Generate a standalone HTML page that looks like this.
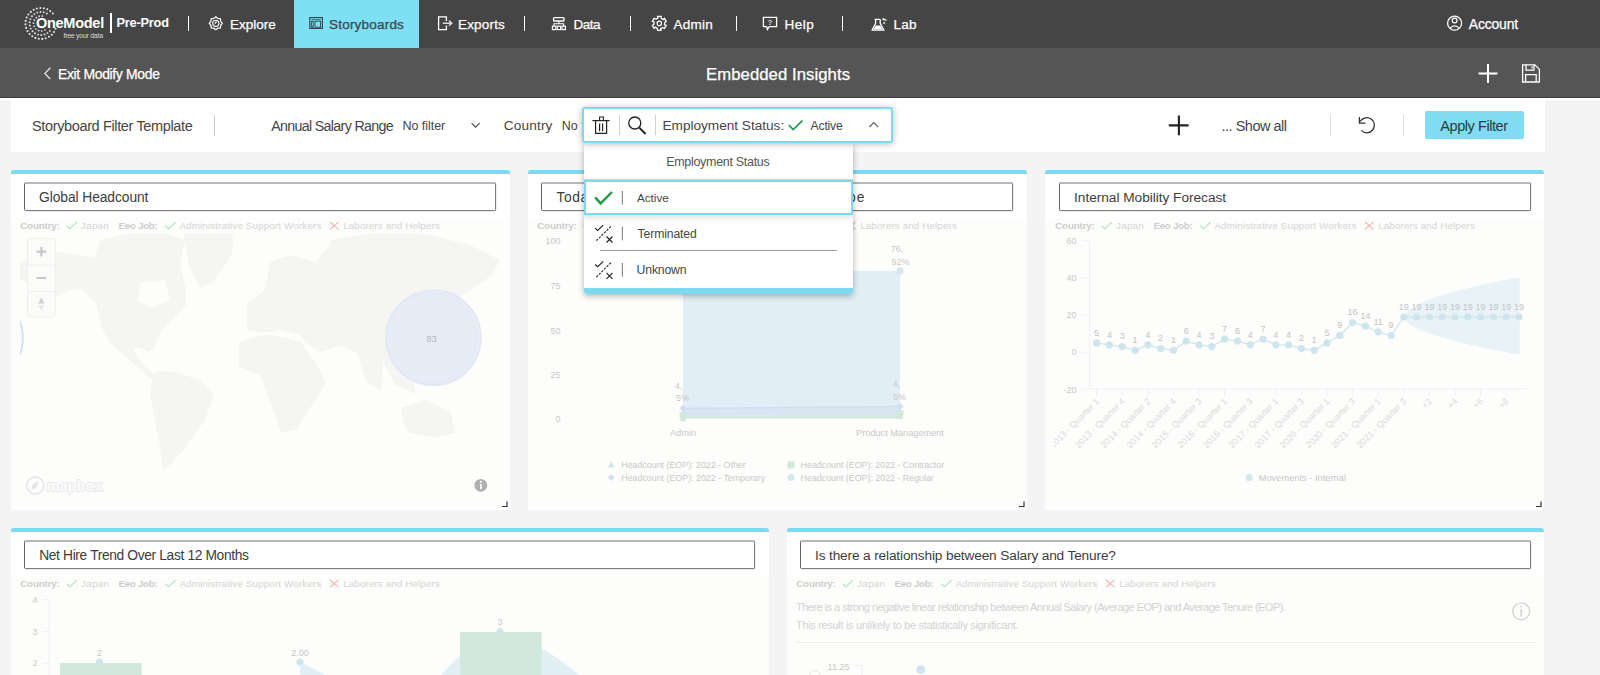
<!DOCTYPE html>
<html><head><meta charset="utf-8"><style>*{box-sizing:border-box;margin:0;padding:0}
html,body{width:1600px;height:675px;overflow:hidden;background:#f4f4f5;font-family:"Liberation Sans",sans-serif;position:relative}
.a{position:absolute;white-space:nowrap}
.card{background:#fdfdfb;border-top:4px solid #7dd9f0;border-radius:3px 3px 0 0}
.ttl{border-top:2px solid #b8b8b8;border-left:1px solid #666;border-right:1px solid #7c7c7c;border-bottom:1px solid #7c7c7c;border-radius:2px;background:#fff;height:29px;box-shadow:0.5px 0.5px 0.5px rgba(0,0,0,0.15)}
</style></head><body>
<div class="a" style="left:0;top:0;width:1600px;height:48px;background:#454545"></div>
<div class="a" style="left:0;top:48px;width:1600px;height:49px;background:#555555"></div>
<div class="a" style="left:0;top:97px;width:1600px;height:1px;background:#3e3e3e"></div>
<div class="a" style="left:0;top:98px;width:1600px;height:2px;background:#fff"></div>
<div class="a" style="left:294px;top:0;width:125px;height:48px;background:#7fdff5"></div>
<div class="a" style="left:188px;top:16px;width:1px;height:15px;background:#fff"></div>
<div class="a" style="left:524px;top:16px;width:1px;height:15px;background:#fff"></div>
<div class="a" style="left:630px;top:16px;width:1px;height:15px;background:#fff"></div>
<div class="a" style="left:736px;top:16px;width:1px;height:15px;background:#fff"></div>
<div class="a" style="left:842px;top:16px;width:1px;height:15px;background:#fff"></div>
<div class="a" style="left:110px;top:13px;width:1.5px;height:20px;background:#fff"></div>
<div class="a" style="left:11px;top:100px;width:1534px;height:52px;background:#fff"></div>
<div class="a" style="left:214px;top:115px;width:1px;height:21px;background:#ccc"></div>
<div class="a" style="left:1330px;top:115px;width:1px;height:21px;background:#ddd"></div>
<div class="a" style="left:1403px;top:115px;width:1px;height:21px;background:#ddd"></div>
<div class="a" style="left:1425px;top:111px;width:99px;height:28px;background:#7fdcf3;border-radius:2px"></div>
<svg class="a" style="left:0;top:100px;z-index:1" width="1600" height="52" viewBox="0 100 1600 52"><g fill="none" stroke="#444" stroke-width="1.1"><path d="M471.6 123.2 L475.6 127.2 L479.6 123.2"/></g><g stroke="#222" stroke-width="2.1" fill="none"><path d="M1178.9 115.6 V135.2 M1168.8 125.4 H1188.6"/></g><g stroke="#333" stroke-width="1.25" fill="none"><path d="M1361.2 130.4 A7.6 7.6 0 1 0 1360.2 121.4"/><path d="M1359.4 117 V123 H1365.4"/></g></svg>
<div class="a card" style="left:11px;top:170px;width:499px;height:340px"><div class="a" style="left:0;top:0;width:499px;height:44px;background:#fff"></div></div>
<div class="a card" style="left:528px;top:170px;width:499px;height:340px"><div class="a" style="left:0;top:0;width:499px;height:44px;background:#fff"></div></div>
<div class="a card" style="left:1045px;top:170px;width:499px;height:340px"><div class="a" style="left:0;top:0;width:499px;height:44px;background:#fff"></div></div>
<div class="a card" style="left:11px;top:528px;width:758px;height:160px"><div class="a" style="left:0;top:0;width:758px;height:44px;background:#fff"></div></div>
<div class="a card" style="left:787px;top:528px;width:757px;height:160px"><div class="a" style="left:0;top:0;width:757px;height:44px;background:#fff"></div></div>
<div class="a ttl" style="left:24px;top:182px;width:472px"></div>
<div class="a ttl" style="left:541px;top:182px;width:472px"></div>
<div class="a ttl" style="left:1059px;top:182px;width:472px"></div>
<div class="a ttl" style="left:24px;top:540px;width:731px"></div>
<div class="a ttl" style="left:800px;top:540px;width:731px"></div>
<svg class="a" style="left:0;top:0" width="1600" height="100" viewBox="0 0 1600 100">
<g fill="#e6e6e6"><circle cx="55.6" cy="28.8" r="1.05"/><circle cx="54.0" cy="32.0" r="1.05"/><circle cx="51.8" cy="34.7" r="1.05"/><circle cx="49.0" cy="36.8" r="1.05"/><circle cx="45.7" cy="38.3" r="1.05"/><circle cx="42.3" cy="38.9" r="1.05"/><circle cx="38.8" cy="38.8" r="1.05"/><circle cx="35.4" cy="37.9" r="1.05"/><circle cx="32.3" cy="36.3" r="1.05"/><circle cx="29.6" cy="34.0" r="1.05"/><circle cx="27.5" cy="31.1" r="1.05"/><circle cx="26.1" cy="27.9" r="1.05"/><circle cx="25.5" cy="24.4" r="1.05"/><circle cx="25.7" cy="20.9" r="1.05"/><circle cx="26.7" cy="17.5" r="1.05"/><circle cx="28.4" cy="14.5" r="1.05"/><circle cx="30.8" cy="11.9" r="1.05"/><circle cx="33.7" cy="9.8" r="1.05"/><circle cx="36.9" cy="8.5" r="1.05"/><circle cx="40.4" cy="8.0" r="1.05"/><circle cx="43.9" cy="8.3" r="1.05"/><circle cx="47.3" cy="9.3" r="1.05"/><circle cx="50.3" cy="11.1" r="1.05"/><circle cx="52.9" cy="13.5" r="1.05"/><circle cx="49.8" cy="30.9" r="0.95"/><circle cx="47.4" cy="33.1" r="0.95"/><circle cx="44.5" cy="34.5" r="0.95"/><circle cx="41.3" cy="35.0" r="0.95"/><circle cx="38.0" cy="34.6" r="0.95"/><circle cx="35.0" cy="33.3" r="0.95"/><circle cx="32.5" cy="31.3" r="0.95"/><circle cx="30.7" cy="28.6" r="0.95"/><circle cx="29.7" cy="25.5" r="0.95"/><circle cx="29.6" cy="22.2" r="0.95"/><circle cx="30.4" cy="19.1" r="0.95"/><circle cx="32.0" cy="16.3" r="0.95"/><circle cx="34.4" cy="14.1" r="0.95"/><circle cx="37.3" cy="12.6" r="0.95"/><circle cx="40.5" cy="12.0" r="0.95"/><circle cx="43.7" cy="12.3" r="0.95"/><circle cx="46.8" cy="13.5" r="0.95"/><circle cx="44.8" cy="30.0" r="0.85"/><circle cx="41.7" cy="31.0" r="0.85"/><circle cx="38.6" cy="30.6" r="0.85"/><circle cx="35.9" cy="29.0" r="0.85"/><circle cx="34.1" cy="26.3" r="0.85"/><circle cx="33.5" cy="23.2" r="0.85"/><circle cx="34.3" cy="20.1" r="0.85"/><circle cx="36.3" cy="17.7" r="0.85"/><circle cx="39.1" cy="16.2" r="0.85"/><circle cx="42.3" cy="16.1" r="0.85"/></g>
<g fill="none" stroke="#fff" stroke-width="1.3">
<polygon points="215.80,16.80 217.83,18.40 220.40,18.70 220.70,21.27 222.30,23.30 220.70,25.33 220.40,27.90 217.83,28.20 215.80,29.80 213.77,28.20 211.20,27.90 210.90,25.33 209.30,23.30 210.90,21.27 211.20,18.70 213.77,18.40" stroke-width="1.25"/>
<circle cx="215.8" cy="23.3" r="3.1" stroke-width="1.1"/>
</g>
<path d="M214.3 24.8 L215.2 21.8 L217.6 21.4 Z" fill="#fff"/>
<g fill="none" stroke="#2f3d42" stroke-width="1.1">
<rect x="309.8" y="17.6" width="12.6" height="10.8"/>
<line x1="311.5" y1="19.6" x2="320.8" y2="19.6" stroke-width="0.7"/>
<rect x="311.6" y="21.2" width="1.6" height="6" stroke-width="0.8"/>
<rect x="315" y="21.2" width="5.6" height="6" stroke-width="0.9"/>
</g>
<g fill="none" stroke="#fff" stroke-width="1.3">
<path d="M446.4 21 V16.8 H438.6 V29.6 H446.4 V25.4"/>
<path d="M442.8 23.2 H451.6 M449 20.6 L451.8 23.2 L449 25.8" stroke="#ddd" stroke-width="1.4"/>
<rect x="553.6" y="17.6" width="10.4" height="3.4" rx="0.8" stroke-width="1.4"/>
<path d="M558.8 21 V23.8 M554 26 V23.8 H563.6 V26" stroke-width="1.1"/>
<rect x="552.4" y="26.2" width="3.4" height="3.4" stroke-width="1.2"/>
<rect x="557.2" y="26.2" width="3.4" height="3.4" stroke-width="1.2"/>
<rect x="562" y="26.2" width="3.4" height="3.4" stroke-width="1.2"/>
<polygon points="657.56,16.41 661.04,16.41 661.32,18.39 663.18,19.65 664.48,18.40 666.22,21.42 664.65,22.65 664.49,24.89 666.22,25.38 664.48,28.40 662.62,27.66 660.61,28.64 661.04,30.39 657.56,30.39 657.28,28.41 655.42,27.15 654.12,28.40 652.38,25.38 653.95,24.15 654.11,21.91 652.38,21.42 654.12,18.40 655.98,19.14 657.99,18.16" stroke-width="1.3"/>
<circle cx="659.3" cy="23.4" r="2.2" stroke-width="1.2"/>
<path d="M763.4 17.4 H776.6 V26.6 H769.2 L767.4 29.4 L766.6 26.6 H763.4 Z" stroke-width="1.3"/>
<path d="M868.5 19.5" />
<path d="M874.6 19.4 H880.4 M875.6 19.4 V23.4 L872.2 30.2 H883.8 L880.2 23.4 V19.4" stroke-width="1.3"/>
<circle cx="1454.6" cy="23.2" r="7" stroke-width="1.3"/>
<circle cx="1454.6" cy="20.6" r="2.4" stroke-width="1.2"/>
<path d="M1449.8 28.4 Q1454.6 23.2 1459.4 28.4" stroke-width="1.2"/>
</g>
<text x="770" y="25.2" font-size="8" font-weight="bold" fill="#ddd" text-anchor="middle" font-family="Liberation Sans">?</text>
<path d="M873.6 29.6 L875.8 25.4 H880.2 L882.4 29.6 Z" fill="#fff"/>
<g fill="#ddd"><circle cx="883.6" cy="19.2" r="1.3"/><circle cx="885.7" cy="19.9" r="1"/><circle cx="884.1" cy="23" r="1"/></g>
<g stroke="#fff" stroke-width="2" fill="none">
<path d="M1488 64 V83 M1478.5 73.4 H1497.5"/>
</g>
<g stroke="#fff" stroke-width="1.3" fill="none">
<path d="M1522.6 64.8 H1534.8 L1539.4 69.4 V82 H1522.6 Z"/>
<path d="M1526 64.8 V70.2 H1534 V64.8"/>
<path d="M1525.6 82 V74.6 H1536.2 V82"/>
</g>
<rect x="1531.4" y="66.4" width="1.2" height="2.2" fill="#fff"/>
<path d="M50.3 67.8 L44.9 73.4 L50.3 79.1" stroke="#e8e8e8" stroke-width="1.3" fill="none"/>
</svg>
<div class="a" style="left:230px;top:17.86px;font-size:13.52px;line-height:13.52px;letter-spacing:0.0px;color:#fff;-webkit-text-stroke:0.25px #fff">Explore</div>
<div class="a" style="left:329px;top:17.86px;font-size:13.52px;line-height:13.52px;letter-spacing:0.2px;color:#3a474b;-webkit-text-stroke:0.25px #3a474b">Storyboards</div>
<div class="a" style="left:458px;top:17.86px;font-size:13.52px;line-height:13.52px;letter-spacing:0.167px;color:#fff;-webkit-text-stroke:0.25px #fff">Exports</div>
<div class="a" style="left:573.5px;top:17.86px;font-size:13.52px;line-height:13.52px;letter-spacing:-0.5px;color:#fff;-webkit-text-stroke:0.25px #fff">Data</div>
<div class="a" style="left:673.5px;top:17.86px;font-size:13.52px;line-height:13.52px;letter-spacing:0.25px;color:#fff;-webkit-text-stroke:0.25px #fff">Admin</div>
<div class="a" style="left:784.5px;top:17.86px;font-size:13.52px;line-height:13.52px;letter-spacing:0.5px;color:#fff;-webkit-text-stroke:0.25px #fff">Help</div>
<div class="a" style="left:893.5px;top:17.86px;font-size:13.52px;line-height:13.52px;letter-spacing:0.25px;color:#fff;-webkit-text-stroke:0.25px #fff">Lab</div>
<div class="a" style="left:1468.8px;top:17.59px;font-size:13.95px;line-height:13.95px;letter-spacing:-0.167px;color:#fff;-webkit-text-stroke:0.25px #fff">Account</div>
<div class="a" style="left:116.5px;top:16.97px;font-size:12.79px;line-height:12.79px;letter-spacing:-0.214px;color:#fff;font-weight:700">Pre-Prod</div>
<div class="a" style="left:36px;top:15.7px;font-size:14.53px;line-height:14.53px;letter-spacing:-0.286px;color:#fff;font-weight:700">OneModel</div>
<div class="a" style="left:63.5px;top:31.69px;font-size:6.98px;line-height:6.98px;letter-spacing:-0.269px;color:#d8d8d8">free your data</div>
<div class="a" style="left:58px;top:67.79px;font-size:13.95px;line-height:13.95px;letter-spacing:-0.333px;color:#fff;-webkit-text-stroke:0.25px #fff">Exit Modify Mode</div>
<div class="a" style="left:706px;top:66.85px;font-size:16.72px;line-height:16.72px;letter-spacing:0.062px;color:#fff;-webkit-text-stroke:0.25px #fff">Embedded Insights</div>
<div class="a" style="left:32px;top:118.5px;font-size:14.53px;line-height:14.53px;letter-spacing:-0.368px;color:#454545">Storyboard Filter Template</div>
<div class="a" style="left:271.2px;top:118.75px;font-size:14.24px;line-height:14.24px;letter-spacing:-0.667px;color:#454545">Annual Salary Range</div>
<div class="a" style="left:402.4px;top:119.82px;font-size:12.5px;line-height:12.5px;letter-spacing:-0.025px;color:#454545">No filter</div>
<div class="a" style="left:503.7px;top:119.04px;font-size:13.66px;line-height:13.66px;letter-spacing:0.15px;color:#454545">Country</div>
<div class="a" style="left:561.8px;top:119.82px;font-size:12.5px;line-height:12.5px;letter-spacing:-0.025px;color:#454545">No filter</div>
<div class="a" style="left:1221.5px;top:118.5px;font-size:14.53px;line-height:14.53px;letter-spacing:-0.5px;color:#454545">... Show all</div>
<div class="a" style="left:1440.3px;top:118.5px;font-size:14.53px;line-height:14.53px;letter-spacing:-0.445px;color:#2c3a3f">Apply Filter</div>
<div class="a" style="left:39px;top:191.31px;font-size:13.81px;line-height:13.81px;letter-spacing:-0.067px;color:#3c3c3c">Global Headcount</div>
<div class="a" style="left:1074.1px;top:191.44px;font-size:13.66px;line-height:13.66px;letter-spacing:-0.024px;color:#3c3c3c">Internal Mobility Forecast</div>
<div class="a" style="left:39.2px;top:549.31px;font-size:13.81px;line-height:13.81px;letter-spacing:-0.36px;color:#3c3c3c">Net Hire Trend Over Last 12 Months</div>
<div class="a" style="left:815px;top:549.44px;font-size:13.66px;line-height:13.66px;letter-spacing:-0.143px;color:#3c3c3c">Is there a relationship between Salary and Tenure?</div>
<div class="a" style="left:556.6px;top:191.31px;font-size:13.81px;line-height:13.81px;letter-spacing:0.567px;color:#3c3c3c">Toda</div>
<div class="a" style="left:848px;top:191.31px;font-size:13.81px;line-height:13.81px;letter-spacing:1.2px;color:#3c3c3c">pe</div>
<svg class="a" style="left:0;top:0;z-index:1" width="1600" height="675" viewBox="0 0 1600 675"><g transform="translate(0,0)" fill="none" stroke-width="1.1"><path d="M66.4 225.6 L69.8 228.8 L76.8 222.2" stroke="#a6e2bb"/><path d="M165.2 225.6 L168.6 228.8 L175.6 222.2" stroke="#a6e2bb"/><path d="M330 221.8 L338.6 229.4 M338.6 221.8 L330 229.4" stroke="#f3b0b0"/></g><g transform="translate(517,0)" fill="none" stroke-width="1.1"><path d="M66.4 225.6 L69.8 228.8 L76.8 222.2" stroke="#a6e2bb"/><path d="M165.2 225.6 L168.6 228.8 L175.6 222.2" stroke="#a6e2bb"/><path d="M330 221.8 L338.6 229.4 M338.6 221.8 L330 229.4" stroke="#f3b0b0"/></g><g transform="translate(1035,0)" fill="none" stroke-width="1.1"><path d="M66.4 225.6 L69.8 228.8 L76.8 222.2" stroke="#a6e2bb"/><path d="M165.2 225.6 L168.6 228.8 L175.6 222.2" stroke="#a6e2bb"/><path d="M330 221.8 L338.6 229.4 M338.6 221.8 L330 229.4" stroke="#f3b0b0"/></g><g transform="translate(0,358)" fill="none" stroke-width="1.1"><path d="M66.4 225.6 L69.8 228.8 L76.8 222.2" stroke="#a6e2bb"/><path d="M165.2 225.6 L168.6 228.8 L175.6 222.2" stroke="#a6e2bb"/><path d="M330 221.8 L338.6 229.4 M338.6 221.8 L330 229.4" stroke="#f3b0b0"/></g><g transform="translate(776,358)" fill="none" stroke-width="1.1"><path d="M66.4 225.6 L69.8 228.8 L76.8 222.2" stroke="#a6e2bb"/><path d="M165.2 225.6 L168.6 228.8 L175.6 222.2" stroke="#a6e2bb"/><path d="M330 221.8 L338.6 229.4 M338.6 221.8 L330 229.4" stroke="#f3b0b0"/></g><defs><clipPath id="mapclip"><rect x="20" y="234" width="480" height="270"/></clipPath></defs><g clip-path="url(#mapclip)"><polygon points="20,262 40,255 60,252 95,258 100,240 130,233 160,232 185,240 180,262 186,290 186,305 170,322 161,331 154,348 148,352 140,348 133,348 140,362 156,376 150,378 136,366 125,356 112,345 103,331 96,303 80,288 70,290 55,297 45,288 20,280" fill="#f5f5f3"/><polygon points="184,233 234,232 232,255 212,283 200,288 190,268 186,250" fill="#f5f5f3"/><polygon points="156,371 175,372 200,380 214,395 205,420 185,448 170,465 163,470 160,448 155,420 150,395 152,380" fill="#f5f5f3"/><polygon points="239,342 268,334 301,342 318,367 326,383.5 310,408 297,429 281,433 268,396 260,375 239,367" fill="#f5f5f3"/><polygon points="247,303 265,290 270,262 290,255 315,262 330,245 335,300 320,330 300,335 280,330 260,333 247,330" fill="#f5f5f3"/><polygon points="330,240 380,232 430,235 470,245 500,260 492,275 470,290 455,300 440,320 420,345 410,365 416,394 395,385 383,361 381,391 365,380 358,353 340,346 320,352 305,342 300,335 320,330 335,300 330,260" fill="#f5f5f3"/><polygon points="401,408 426,400 451,412.6 455,433 434,437.5 409,433 403,421" fill="#f5f5f3"/><polygon points="140,282 165,280 170,300 152,308 138,300" fill="#fdfdfb"/><circle cx="433.5" cy="337.8" r="47.5" fill="#e7edf7" stroke="#e0e7f3" stroke-width="1.5"/><circle cx="431" cy="337.8" r="45" fill="none" stroke="#e3e9f4" stroke-width="1"/><circle cx="-22" cy="338" r="45" fill="#f3f6fb" stroke="#d3ddf1" stroke-width="1.6"/></g><text x="431.5" y="341.5" font-size="9.5" fill="#b4b4b4" text-anchor="middle" font-family="Liberation Sans" >83</text><rect x="27.6" y="238.4" width="27.6" height="78.6" rx="3" fill="#fbfbfa" stroke="#eeeeee" stroke-width="1"/><path d="M28 265 H55 M28 291.4 H55" stroke="#efefef" stroke-width="1"/><path d="M41.4 246.8 V256.4 M36.6 251.6 H46.2 M36.6 278 H46.2" stroke="#c6c6c6" stroke-width="2.1"/><path d="M41.4 297.6 L38.2 303.4 H44.6 Z" fill="#d0d0d0"/><path d="M41.4 311 L38.2 305.2 H44.6 Z" fill="#e8e8e8"/><circle cx="35.3" cy="485.5" r="8.6" fill="#fdfdfd" stroke="#e4e4e4" stroke-width="1.5"/><path d="M31.5 489.5 Q31 482.5 38.5 481.5 Q38.2 489 31.5 489.5 Z" fill="#e6e6e6"/><text x="46.5" y="491.2" font-size="14.5" font-weight="bold" fill="#fdfdfd" stroke="#e2e2e2" stroke-width="1.3" paint-order="stroke" textLength="56" lengthAdjust="spacingAndGlyphs" font-family="Liberation Sans">mapbox</text><circle cx="480.8" cy="485.3" r="6.4" fill="#b0b0b0"/><rect x="480" y="484" width="1.8" height="5" fill="#fdfdfb"/><circle cx="480.9" cy="481.8" r="1.1" fill="#fdfdfb"/><path d="M507 501.5 V506.5 H502" fill="none" stroke="#333" stroke-width="1.2"/><path d="M1024 501.5 V506.5 H1019" fill="none" stroke="#333" stroke-width="1.2"/><path d="M1541 501.5 V506.5 H1536" fill="none" stroke="#333" stroke-width="1.2"/><text x="560.5" y="244.2" font-size="9" fill="#c8c8c8" text-anchor="end" font-family="Liberation Sans" >100</text><text x="560.5" y="289.2" font-size="9" fill="#c8c8c8" text-anchor="end" font-family="Liberation Sans" >75</text><text x="560.5" y="334.2" font-size="9" fill="#c8c8c8" text-anchor="end" font-family="Liberation Sans" >50</text><text x="560.5" y="378.2" font-size="9" fill="#c8c8c8" text-anchor="end" font-family="Liberation Sans" >25</text><text x="560.5" y="422.4" font-size="9" fill="#c8c8c8" text-anchor="end" font-family="Liberation Sans" >0</text><polygon points="683,271 900,271 900,407 683,408.4" fill="#e1eef5"/><polygon points="683,408.4 900,406.6 900,415 683,416" fill="#d9e5f3"/><polygon points="683,415.6 900,414.6 900,418.6 683,418.6" fill="#d5eadf"/><path d="M683 408.4 L900 406.6" stroke="#d0def2" stroke-width="1.5"/><circle cx="900" cy="270.9" r="3.6" fill="#d4e8f0"/><path d="M683 404.8 L686.5 408.3 L683 411.8 L679.5 408.3 Z" fill="#d0dcf3"/><path d="M900 403.0 L903.5 406.5 L900 410.0 L896.5 406.5 Z" fill="#d0dcf3"/><rect x="679.6" y="412.0" width="6.8" height="6.8" fill="#d2e8dd"/><path d="M683 416.0 L686.4 421.0 H679.6 Z" fill="#d0e6dc"/><rect x="896.6" y="410.0" width="6.8" height="6.8" fill="#d2e8dd"/><path d="M900 414.0 L903.4 419.0 H896.6 Z" fill="#d0e6dc"/><text x="897" y="251.5" font-size="9" fill="#c8c8c8" text-anchor="middle" font-family="Liberation Sans" >76,</text><text x="900.5" y="264.5" font-size="9" fill="#c8c8c8" text-anchor="middle" font-family="Liberation Sans" >92%</text><text x="678.5" y="388.5" font-size="9" fill="#c8c8c8" text-anchor="middle" font-family="Liberation Sans" >4,</text><text x="682.5" y="401" font-size="9" fill="#c8c8c8" text-anchor="middle" font-family="Liberation Sans" >5%</text><text x="896.5" y="386.5" font-size="9" fill="#c8c8c8" text-anchor="middle" font-family="Liberation Sans" >4,</text><text x="899.5" y="399.5" font-size="9" fill="#c8c8c8" text-anchor="middle" font-family="Liberation Sans" >5%</text><text x="683" y="436" font-size="9.2" fill="#c8c8c8" text-anchor="middle" font-family="Liberation Sans" >Admin</text><text x="900" y="436" font-size="9.2" fill="#c8c8c8" text-anchor="middle" font-family="Liberation Sans" >Product Management</text><path d="M611.3 461.4 L614.8 467.6 H607.8 Z" fill="#cfe6de"/><path d="M611.2 474 L614.6 477.5 L611.2 481 L607.8 477.5 Z" fill="#d2ddf3"/><rect x="787.4" y="461.4" width="7" height="7" fill="#d2e8dd"/><circle cx="791" cy="477.5" r="3.6" fill="#d4e8f0"/><text x="621.3" y="468.4" font-size="8.85" fill="#c8c8c8" text-anchor="start" font-family="Liberation Sans" >Headcount (EOP): 2022 - Other</text><text x="621.3" y="480.8" font-size="8.85" fill="#c8c8c8" text-anchor="start" font-family="Liberation Sans" >Headcount (EOP): 2022 - Temporary</text><text x="800.6" y="468.4" font-size="8.85" fill="#c8c8c8" text-anchor="start" font-family="Liberation Sans" >Headcount (EOP): 2022 - Contractor</text><text x="800.6" y="480.8" font-size="8.85" fill="#c8c8c8" text-anchor="start" font-family="Liberation Sans" >Headcount (EOP): 2022 - Regular</text><text x="1076.5" y="244.09999999999997" font-size="9" fill="#c8c8c8" text-anchor="end" font-family="Liberation Sans" >60</text><path d="M1082 240.9 H1089.5" stroke="#eef0f5" stroke-width="1"/><text x="1076.5" y="281.2" font-size="9" fill="#c8c8c8" text-anchor="end" font-family="Liberation Sans" >40</text><path d="M1082 278.0 H1089.5" stroke="#eef0f5" stroke-width="1"/><text x="1076.5" y="318.29999999999995" font-size="9" fill="#c8c8c8" text-anchor="end" font-family="Liberation Sans" >20</text><path d="M1082 315.1 H1089.5" stroke="#eef0f5" stroke-width="1"/><text x="1076.5" y="355.4" font-size="9" fill="#c8c8c8" text-anchor="end" font-family="Liberation Sans" >0</text><path d="M1082 352.2 H1089.5" stroke="#eef0f5" stroke-width="1"/><text x="1076.5" y="392.5" font-size="9" fill="#c8c8c8" text-anchor="end" font-family="Liberation Sans" >-20</text><path d="M1082 389.3 H1089.5" stroke="#eef0f5" stroke-width="1"/><path d="M1089.5 241 V388.8 H1527" stroke="#edf0f6" stroke-width="1" fill="none"/><polygon points="1403.8,317.0 1406.7,311.7 1409.6,309.3 1412.5,307.4 1415.4,305.7 1418.3,304.2 1421.2,302.9 1424.1,301.7 1427.0,300.5 1429.9,299.4 1432.8,298.3 1435.6,297.3 1438.5,296.4 1441.4,295.5 1444.3,294.6 1447.2,293.7 1450.1,292.9 1453.0,292.0 1455.9,291.2 1458.8,290.5 1461.7,289.7 1464.6,289.0 1467.5,288.2 1470.4,287.5 1473.3,286.8 1476.2,286.2 1479.1,285.5 1482.0,284.8 1484.9,284.2 1487.8,283.5 1490.6,282.9 1493.5,282.3 1496.4,281.7 1499.3,281.1 1502.2,280.5 1505.1,279.9 1508.0,279.3 1510.9,278.7 1513.8,278.2 1516.7,277.6 1519.6,277.1 1519.6,354.8 1516.7,354.3 1513.8,353.8 1510.9,353.3 1508.0,352.7 1505.1,352.2 1502.2,351.6 1499.3,351.0 1496.4,350.5 1493.5,349.9 1490.6,349.3 1487.8,348.7 1484.9,348.1 1482.0,347.5 1479.1,346.9 1476.2,346.2 1473.3,345.6 1470.4,344.9 1467.5,344.2 1464.6,343.5 1461.7,342.8 1458.8,342.1 1455.9,341.4 1453.0,340.6 1450.1,339.8 1447.2,339.0 1444.3,338.2 1441.4,337.4 1438.5,336.5 1435.6,335.6 1432.8,334.6 1429.9,333.6 1427.0,332.6 1424.1,331.5 1421.2,330.3 1418.3,329.0 1415.4,327.6 1412.5,326.1 1409.6,324.2 1406.7,321.9 1403.8,317.0" fill="#e8f3f8"/><polyline points="1096.6,342.9 1109.4,344.8 1122.2,346.6 1135.0,350.3 1147.8,344.8 1160.6,348.5 1173.4,350.3 1186.2,341.1 1199.0,344.8 1211.8,346.6 1224.6,339.2 1237.4,341.1 1250.2,344.8 1263.0,339.2 1275.8,344.8 1288.6,344.8 1301.4,348.5 1314.2,350.3 1327.0,342.9 1339.8,335.5 1352.6,322.5 1365.4,326.2 1378.2,331.8 1391.0,335.5 1403.8,317.0 1416.6,317.0 1429.4,317.0 1442.2,317.0 1455.0,317.0 1467.8,317.0 1480.6,317.0 1493.4,317.0 1506.2,317.0 1519.0,317.0" fill="none" stroke="#d0e6ee" stroke-width="1.3"/><circle cx="1096.6" cy="342.9" r="3.6" fill="#cfe5ee"/><text x="1096.6" y="335.7" font-size="9" fill="#c4c4c4" text-anchor="middle" font-family="Liberation Sans" >5</text><circle cx="1109.4" cy="344.8" r="3.6" fill="#cfe5ee"/><text x="1109.4" y="337.6" font-size="9" fill="#c4c4c4" text-anchor="middle" font-family="Liberation Sans" >4</text><circle cx="1122.2" cy="346.6" r="3.6" fill="#cfe5ee"/><text x="1122.2" y="339.4" font-size="9" fill="#c4c4c4" text-anchor="middle" font-family="Liberation Sans" >3</text><circle cx="1135.0" cy="350.3" r="3.6" fill="#cfe5ee"/><text x="1135.0" y="343.1" font-size="9" fill="#c4c4c4" text-anchor="middle" font-family="Liberation Sans" >1</text><circle cx="1147.8" cy="344.8" r="3.6" fill="#cfe5ee"/><text x="1147.8" y="337.6" font-size="9" fill="#c4c4c4" text-anchor="middle" font-family="Liberation Sans" >4</text><circle cx="1160.6" cy="348.5" r="3.6" fill="#cfe5ee"/><text x="1160.6" y="341.3" font-size="9" fill="#c4c4c4" text-anchor="middle" font-family="Liberation Sans" >2</text><circle cx="1173.4" cy="350.3" r="3.6" fill="#cfe5ee"/><text x="1173.4" y="343.1" font-size="9" fill="#c4c4c4" text-anchor="middle" font-family="Liberation Sans" >1</text><circle cx="1186.2" cy="341.1" r="3.6" fill="#cfe5ee"/><text x="1186.2" y="333.9" font-size="9" fill="#c4c4c4" text-anchor="middle" font-family="Liberation Sans" >6</text><circle cx="1199.0" cy="344.8" r="3.6" fill="#cfe5ee"/><text x="1199.0" y="337.6" font-size="9" fill="#c4c4c4" text-anchor="middle" font-family="Liberation Sans" >4</text><circle cx="1211.8" cy="346.6" r="3.6" fill="#cfe5ee"/><text x="1211.8" y="339.4" font-size="9" fill="#c4c4c4" text-anchor="middle" font-family="Liberation Sans" >3</text><circle cx="1224.6" cy="339.2" r="3.6" fill="#cfe5ee"/><text x="1224.6" y="332.0" font-size="9" fill="#c4c4c4" text-anchor="middle" font-family="Liberation Sans" >7</text><circle cx="1237.4" cy="341.1" r="3.6" fill="#cfe5ee"/><text x="1237.4" y="333.9" font-size="9" fill="#c4c4c4" text-anchor="middle" font-family="Liberation Sans" >6</text><circle cx="1250.2" cy="344.8" r="3.6" fill="#cfe5ee"/><text x="1250.2" y="337.6" font-size="9" fill="#c4c4c4" text-anchor="middle" font-family="Liberation Sans" >4</text><circle cx="1263.0" cy="339.2" r="3.6" fill="#cfe5ee"/><text x="1263.0" y="332.0" font-size="9" fill="#c4c4c4" text-anchor="middle" font-family="Liberation Sans" >7</text><circle cx="1275.8" cy="344.8" r="3.6" fill="#cfe5ee"/><text x="1275.8" y="337.6" font-size="9" fill="#c4c4c4" text-anchor="middle" font-family="Liberation Sans" >4</text><circle cx="1288.6" cy="344.8" r="3.6" fill="#cfe5ee"/><text x="1288.6" y="337.6" font-size="9" fill="#c4c4c4" text-anchor="middle" font-family="Liberation Sans" >4</text><circle cx="1301.4" cy="348.5" r="3.6" fill="#cfe5ee"/><text x="1301.4" y="341.3" font-size="9" fill="#c4c4c4" text-anchor="middle" font-family="Liberation Sans" >2</text><circle cx="1314.2" cy="350.3" r="3.6" fill="#cfe5ee"/><text x="1314.2" y="343.1" font-size="9" fill="#c4c4c4" text-anchor="middle" font-family="Liberation Sans" >1</text><circle cx="1327.0" cy="342.9" r="3.6" fill="#cfe5ee"/><text x="1327.0" y="335.7" font-size="9" fill="#c4c4c4" text-anchor="middle" font-family="Liberation Sans" >5</text><circle cx="1339.8" cy="335.5" r="3.6" fill="#cfe5ee"/><text x="1339.8" y="328.3" font-size="9" fill="#c4c4c4" text-anchor="middle" font-family="Liberation Sans" >9</text><circle cx="1352.6" cy="322.5" r="3.6" fill="#cfe5ee"/><text x="1352.6" y="315.3" font-size="9" fill="#c4c4c4" text-anchor="middle" font-family="Liberation Sans" >16</text><circle cx="1365.4" cy="326.2" r="3.6" fill="#cfe5ee"/><text x="1365.4" y="319.0" font-size="9" fill="#c4c4c4" text-anchor="middle" font-family="Liberation Sans" >14</text><circle cx="1378.2" cy="331.8" r="3.6" fill="#cfe5ee"/><text x="1378.2" y="324.6" font-size="9" fill="#c4c4c4" text-anchor="middle" font-family="Liberation Sans" >11</text><circle cx="1391.0" cy="335.5" r="3.6" fill="#cfe5ee"/><text x="1391.0" y="328.3" font-size="9" fill="#c4c4c4" text-anchor="middle" font-family="Liberation Sans" >9</text><circle cx="1403.8" cy="317.0" r="3.6" fill="#cfe5ee"/><text x="1403.8" y="309.8" font-size="9" fill="#c4c4c4" text-anchor="middle" font-family="Liberation Sans" >19</text><circle cx="1416.6" cy="317.0" r="3.6" fill="#cfe5ee"/><text x="1416.6" y="309.8" font-size="9" fill="#c4c4c4" text-anchor="middle" font-family="Liberation Sans" >19</text><circle cx="1429.4" cy="317.0" r="3.6" fill="#cfe5ee"/><text x="1429.4" y="309.8" font-size="9" fill="#c4c4c4" text-anchor="middle" font-family="Liberation Sans" >19</text><circle cx="1442.2" cy="317.0" r="3.6" fill="#cfe5ee"/><text x="1442.2" y="309.8" font-size="9" fill="#c4c4c4" text-anchor="middle" font-family="Liberation Sans" >19</text><circle cx="1455.0" cy="317.0" r="3.6" fill="#cfe5ee"/><text x="1455.0" y="309.8" font-size="9" fill="#c4c4c4" text-anchor="middle" font-family="Liberation Sans" >19</text><circle cx="1467.8" cy="317.0" r="3.6" fill="#cfe5ee"/><text x="1467.8" y="309.8" font-size="9" fill="#c4c4c4" text-anchor="middle" font-family="Liberation Sans" >19</text><circle cx="1480.6" cy="317.0" r="3.6" fill="#cfe5ee"/><text x="1480.6" y="309.8" font-size="9" fill="#c4c4c4" text-anchor="middle" font-family="Liberation Sans" >19</text><circle cx="1493.4" cy="317.0" r="3.6" fill="#cfe5ee"/><text x="1493.4" y="309.8" font-size="9" fill="#c4c4c4" text-anchor="middle" font-family="Liberation Sans" >19</text><circle cx="1506.2" cy="317.0" r="3.6" fill="#cfe5ee"/><text x="1506.2" y="309.8" font-size="9" fill="#c4c4c4" text-anchor="middle" font-family="Liberation Sans" >19</text><circle cx="1519.0" cy="317.0" r="3.6" fill="#cfe5ee"/><text x="1519.0" y="309.8" font-size="9" fill="#c4c4c4" text-anchor="middle" font-family="Liberation Sans" >19</text><defs><clipPath id="c3clip"><rect x="1054" y="385" width="480" height="80"/></clipPath></defs><g clip-path="url(#c3clip)"><path d="M1096.6 389 V396" stroke="#eef0f5" stroke-width="1"/><text transform="translate(1099.8,402) rotate(-45)" font-size="9" fill="#dadada" text-anchor="end" font-family="Liberation Sans">2013 - Quarter 1</text><path d="M1122.2 389 V396" stroke="#eef0f5" stroke-width="1"/><text transform="translate(1125.4,402) rotate(-45)" font-size="9" fill="#dadada" text-anchor="end" font-family="Liberation Sans">2013 - Quarter 4</text><path d="M1147.8 389 V396" stroke="#eef0f5" stroke-width="1"/><text transform="translate(1151.0,402) rotate(-45)" font-size="9" fill="#dadada" text-anchor="end" font-family="Liberation Sans">2014 - Quarter 2</text><path d="M1173.4 389 V396" stroke="#eef0f5" stroke-width="1"/><text transform="translate(1176.6,402) rotate(-45)" font-size="9" fill="#dadada" text-anchor="end" font-family="Liberation Sans">2014 - Quarter 4</text><path d="M1199.0 389 V396" stroke="#eef0f5" stroke-width="1"/><text transform="translate(1202.2,402) rotate(-45)" font-size="9" fill="#dadada" text-anchor="end" font-family="Liberation Sans">2015 - Quarter 3</text><path d="M1224.6 389 V396" stroke="#eef0f5" stroke-width="1"/><text transform="translate(1227.8,402) rotate(-45)" font-size="9" fill="#dadada" text-anchor="end" font-family="Liberation Sans">2016 - Quarter 1</text><path d="M1250.2 389 V396" stroke="#eef0f5" stroke-width="1"/><text transform="translate(1253.4,402) rotate(-45)" font-size="9" fill="#dadada" text-anchor="end" font-family="Liberation Sans">2016 - Quarter 3</text><path d="M1275.8 389 V396" stroke="#eef0f5" stroke-width="1"/><text transform="translate(1279.0,402) rotate(-45)" font-size="9" fill="#dadada" text-anchor="end" font-family="Liberation Sans">2017 - Quarter 1</text><path d="M1301.4 389 V396" stroke="#eef0f5" stroke-width="1"/><text transform="translate(1304.6,402) rotate(-45)" font-size="9" fill="#dadada" text-anchor="end" font-family="Liberation Sans">2017 - Quarter 3</text><path d="M1327.0 389 V396" stroke="#eef0f5" stroke-width="1"/><text transform="translate(1330.2,402) rotate(-45)" font-size="9" fill="#dadada" text-anchor="end" font-family="Liberation Sans">2020 - Quarter 1</text><path d="M1352.6 389 V396" stroke="#eef0f5" stroke-width="1"/><text transform="translate(1355.8,402) rotate(-45)" font-size="9" fill="#dadada" text-anchor="end" font-family="Liberation Sans">2020 - Quarter 3</text><path d="M1378.2 389 V396" stroke="#eef0f5" stroke-width="1"/><text transform="translate(1381.4,402) rotate(-45)" font-size="9" fill="#dadada" text-anchor="end" font-family="Liberation Sans">2021 - Quarter 1</text><path d="M1403.8 389 V396" stroke="#eef0f5" stroke-width="1"/><text transform="translate(1407.0,402) rotate(-45)" font-size="9" fill="#dadada" text-anchor="end" font-family="Liberation Sans">2021 - Quarter 3</text><path d="M1429.4 389 V396" stroke="#eef0f5" stroke-width="1"/><text transform="translate(1432.6,402) rotate(-45)" font-size="9" fill="#dadada" text-anchor="end" font-family="Liberation Sans">+2</text><path d="M1455.0 389 V396" stroke="#eef0f5" stroke-width="1"/><text transform="translate(1458.2,402) rotate(-45)" font-size="9" fill="#dadada" text-anchor="end" font-family="Liberation Sans">+4</text><path d="M1480.6 389 V396" stroke="#eef0f5" stroke-width="1"/><text transform="translate(1483.8,402) rotate(-45)" font-size="9" fill="#dadada" text-anchor="end" font-family="Liberation Sans">+6</text><path d="M1506.2 389 V396" stroke="#eef0f5" stroke-width="1"/><text transform="translate(1509.4,402) rotate(-45)" font-size="9" fill="#dadada" text-anchor="end" font-family="Liberation Sans">+8</text></g><circle cx="1249.2" cy="477.4" r="3.6" fill="#d4e8f0"/><text x="1258.7" y="480.6" font-size="9.3" fill="#c8c8c8" text-anchor="start" font-family="Liberation Sans" >Movements - Internal</text><text x="37.5" y="602.7" font-size="9" fill="#c8c8c8" text-anchor="end" font-family="Liberation Sans" >4</text><path d="M42 599.5 H49" stroke="#eef0f5" stroke-width="1"/><text x="37.5" y="634.8000000000001" font-size="9" fill="#c8c8c8" text-anchor="end" font-family="Liberation Sans" >3</text><path d="M42 631.6 H49" stroke="#eef0f5" stroke-width="1"/><text x="37.5" y="666.4000000000001" font-size="9" fill="#c8c8c8" text-anchor="end" font-family="Liberation Sans" >2</text><path d="M42 663.2 H49" stroke="#eef0f5" stroke-width="1"/><path d="M49 599 V680" stroke="#eef0f5" stroke-width="1"/><path d="M437 680 Q470 640 500 632 Q540 640 585 680 Z" fill="#e2eff5"/><path d="M300 662 L335 680 H300 Z" fill="#e2eff5"/><circle cx="99.5" cy="662" r="3.6" fill="#cfe5ee"/><text x="99.5" y="655.5" font-size="9" fill="#c8c8c8" text-anchor="middle" font-family="Liberation Sans" >2</text><circle cx="300" cy="662" r="3.6" fill="#cfe5ee"/><text x="300" y="655.5" font-size="9" fill="#c8c8c8" text-anchor="middle" font-family="Liberation Sans" >2.00</text><circle cx="500" cy="631.5" r="3.6" fill="#cfe5ee"/><text x="500" y="625.0" font-size="9" fill="#c8c8c8" text-anchor="middle" font-family="Liberation Sans" >3</text><rect x="60" y="663" width="81.6" height="20" fill="#d0e8de"/><rect x="460" y="632" width="81.6" height="50" fill="#d0e8de"/><path d="M796 642.5 H1535.5" stroke="#ececec" stroke-width="1"/><circle cx="1521.2" cy="611.4" r="8.4" fill="none" stroke="#cfcfcf" stroke-width="1.2"/><path d="M1521.2 609 V616.4" stroke="#cfcfcf" stroke-width="1.4"/><circle cx="1521.2" cy="606.4" r="0.9" fill="#cfcfcf"/><text x="838.5" y="669.8" font-size="9" fill="#c8c8c8" text-anchor="middle" font-family="Liberation Sans" >11.25</text><path d="M854 665.5 H862 V680" stroke="#eef0f5" fill="none" stroke-width="1"/><circle cx="920.8" cy="669.7" r="4.4" fill="#cfe5ee"/><circle cx="815" cy="676" r="5.5" fill="none" stroke="#e2e2e2" stroke-width="1"/></svg>
<div class="a" style="left:796px;top:601.65px;font-size:11.05px;line-height:11.05px;letter-spacing:-0.558px;color:#d2d2d2">There is a strong negative linear relationship between Annual Salary (Average EOP) and Average Tenure (EOP).</div>
<div class="a" style="left:796px;top:620.47px;font-size:10.9px;line-height:10.9px;letter-spacing:-0.275px;color:#d2d2d2">This result is unlikely to be statistically significant.</div>
<div style='position:absolute;left:0;top:0;z-index:2'><div class="a" style="left:20.20px;top:220.64px;font-size:9.88px;line-height:9.88px;letter-spacing:-0.214px;color:#cdcdcd;font-weight:700">Country:</div>
<div class="a" style="left:81.00px;top:220.64px;font-size:9.88px;line-height:9.88px;letter-spacing:0.225px;color:#d4d4d4">Japan</div>
<div class="a" style="left:118.50px;top:220.64px;font-size:9.88px;line-height:9.88px;letter-spacing:-0.357px;color:#cdcdcd;font-weight:700">Eeo Job:</div>
<div class="a" style="left:179.40px;top:220.64px;font-size:9.88px;line-height:9.88px;letter-spacing:0.113px;color:#d4d4d4">Administrative Support Workers</div>
<div class="a" style="left:343.20px;top:220.64px;font-size:9.88px;line-height:9.88px;letter-spacing:0.089px;color:#d4d4d4">Laborers and Helpers</div>
<div class="a" style="left:537.20px;top:220.64px;font-size:9.88px;line-height:9.88px;letter-spacing:-0.214px;color:#cdcdcd;font-weight:700">Country:</div>
<div class="a" style="left:598.00px;top:220.64px;font-size:9.88px;line-height:9.88px;letter-spacing:0.225px;color:#d4d4d4">Japan</div>
<div class="a" style="left:635.50px;top:220.64px;font-size:9.88px;line-height:9.88px;letter-spacing:-0.357px;color:#cdcdcd;font-weight:700">Eeo Job:</div>
<div class="a" style="left:696.40px;top:220.64px;font-size:9.88px;line-height:9.88px;letter-spacing:0.113px;color:#d4d4d4">Administrative Support Workers</div>
<div class="a" style="left:860.20px;top:220.64px;font-size:9.88px;line-height:9.88px;letter-spacing:0.089px;color:#d4d4d4">Laborers and Helpers</div>
<div class="a" style="left:1055.20px;top:220.64px;font-size:9.88px;line-height:9.88px;letter-spacing:-0.214px;color:#cdcdcd;font-weight:700">Country:</div>
<div class="a" style="left:1116.00px;top:220.64px;font-size:9.88px;line-height:9.88px;letter-spacing:0.225px;color:#d4d4d4">Japan</div>
<div class="a" style="left:1153.50px;top:220.64px;font-size:9.88px;line-height:9.88px;letter-spacing:-0.357px;color:#cdcdcd;font-weight:700">Eeo Job:</div>
<div class="a" style="left:1214.40px;top:220.64px;font-size:9.88px;line-height:9.88px;letter-spacing:0.113px;color:#d4d4d4">Administrative Support Workers</div>
<div class="a" style="left:1378.20px;top:220.64px;font-size:9.88px;line-height:9.88px;letter-spacing:0.089px;color:#d4d4d4">Laborers and Helpers</div>
<div class="a" style="left:20.20px;top:578.64px;font-size:9.88px;line-height:9.88px;letter-spacing:-0.214px;color:#cdcdcd;font-weight:700">Country:</div>
<div class="a" style="left:81.00px;top:578.64px;font-size:9.88px;line-height:9.88px;letter-spacing:0.225px;color:#d4d4d4">Japan</div>
<div class="a" style="left:118.50px;top:578.64px;font-size:9.88px;line-height:9.88px;letter-spacing:-0.357px;color:#cdcdcd;font-weight:700">Eeo Job:</div>
<div class="a" style="left:179.40px;top:578.64px;font-size:9.88px;line-height:9.88px;letter-spacing:0.113px;color:#d4d4d4">Administrative Support Workers</div>
<div class="a" style="left:343.20px;top:578.64px;font-size:9.88px;line-height:9.88px;letter-spacing:0.089px;color:#d4d4d4">Laborers and Helpers</div>
<div class="a" style="left:796.20px;top:578.64px;font-size:9.88px;line-height:9.88px;letter-spacing:-0.214px;color:#cdcdcd;font-weight:700">Country:</div>
<div class="a" style="left:857.00px;top:578.64px;font-size:9.88px;line-height:9.88px;letter-spacing:0.225px;color:#d4d4d4">Japan</div>
<div class="a" style="left:894.50px;top:578.64px;font-size:9.88px;line-height:9.88px;letter-spacing:-0.357px;color:#cdcdcd;font-weight:700">Eeo Job:</div>
<div class="a" style="left:955.40px;top:578.64px;font-size:9.88px;line-height:9.88px;letter-spacing:0.113px;color:#d4d4d4">Administrative Support Workers</div>
<div class="a" style="left:1119.20px;top:578.64px;font-size:9.88px;line-height:9.88px;letter-spacing:0.089px;color:#d4d4d4">Laborers and Helpers</div></div>
<div class="a" style="left:582px;top:107px;width:311px;height:36px;border:2px solid #7dd9f0;border-radius:3px;background:#fff;box-shadow:0 1px 7px rgba(0,0,0,0.28);z-index:5"></div>
<div class="a" style="left:584px;top:143px;width:269px;height:151px;background:#fff;border-radius:0 0 3px 3px;box-shadow:0 2px 6px rgba(0,0,0,0.3);z-index:4;overflow:hidden">
  <div class="a" style="left:0;top:36px;width:269px;height:1px;background:#d8d8d8"></div>
  <div class="a" style="left:0;top:37px;width:269px;height:35px;border:2px solid #7dd9f0;box-shadow:0 3px 6px rgba(0,0,0,0.12)"></div>
  <div class="a" style="left:16px;top:107px;width:237px;height:1px;background:#999"></div>
  <div class="a" style="left:0;top:145px;width:269px;height:6px;background:#7dd9f0"></div>
</div>
<svg class="a" style="left:0;top:0;z-index:6" width="1600" height="300" viewBox="0 0 1600 300">
<g fill="none" stroke="#222" stroke-width="1.2">
<path d="M592.4 120.6 H609.6"/>
<path d="M599.6 120.4 V117 H603.4 V120.4" stroke-width="1.1"/>
<path d="M595.6 121 V133.4 H606.6 V121"/>
<path d="M599.6 123.4 V131.2 M602.6 123.4 V131.2" stroke-width="1.2"/>
<circle cx="634.8" cy="123" r="6" stroke-width="1.3"/>
<path d="M639.2 127.6 L645.6 134" stroke-width="2"/>
<path d="M869.4 127.2 L873.8 122.6 L878.2 127.2" stroke="#555" stroke-width="1.1"/>
<path d="M788.8 125.2 L793.2 129.6 L802.4 120.6" stroke="#1f9d49" stroke-width="1.8"/>
<path d="M595.2 197.4 L600.6 203.4 L612 192" stroke="#1f9d49" stroke-width="2.4"/>
<path d="M622.3 191 V204.6" stroke="#777" stroke-width="1"/>
</g>
<path d="M619.5 115 V135 M655.5 115 V135" stroke="#d0d0d0" stroke-width="1"/>
<g transform="translate(0,0.0)" fill="none" stroke="#222" stroke-width="1.1">
<path d="M595.1 228.2 L597.6 230.4 L603.3 225.1"/>
<path d="M596.4 240.7 L611.1 226.2" stroke-dasharray="2.3 1.3" stroke="#2a2a2a" stroke-width="1.15"/>
<path d="M606.5 236.5 L612.5 242.5 M612.5 236.5 L606.5 242.5" stroke-width="1.15"/>
<path d="M622.3 226.7 V240.4" stroke="#777" stroke-width="1"/>
</g>
<g transform="translate(0,36.3)" fill="none" stroke="#222" stroke-width="1.1">
<path d="M595.1 228.2 L597.6 230.4 L603.3 225.1"/>
<path d="M596.4 240.7 L611.1 226.2" stroke-dasharray="2.3 1.3" stroke="#2a2a2a" stroke-width="1.15"/>
<path d="M606.5 236.5 L612.5 242.5 M612.5 236.5 L606.5 242.5" stroke-width="1.15"/>
<path d="M622.3 226.7 V240.4" stroke="#777" stroke-width="1"/>
</g>
</svg>
<div style="position:absolute;left:0;top:0;z-index:7">
<div class="a" style="left:662.5px;top:118.84px;font-size:13.66px;line-height:13.66px;letter-spacing:-0.029px;color:#454545">Employment Status:</div>
<div class="a" style="left:810.6px;top:119.96px;font-size:12.21px;line-height:12.21px;letter-spacing:-0.22px;color:#454545">Active</div>
<div class="a" style="left:666.2px;top:156.12px;font-size:12.5px;line-height:12.5px;letter-spacing:-0.301px;color:#555">Employment Status</div>
<div class="a" style="left:637px;top:192.36px;font-size:11.63px;line-height:11.63px;letter-spacing:0.0px;color:#454545">Active</div>
<div class="a" style="left:637.6px;top:227.86px;font-size:12.21px;line-height:12.21px;letter-spacing:-0.133px;color:#454545">Terminated</div>
<div class="a" style="left:636.6px;top:263.66px;font-size:12.21px;line-height:12.21px;letter-spacing:-0.15px;color:#454545">Unknown</div>
</div>
</body></html>
